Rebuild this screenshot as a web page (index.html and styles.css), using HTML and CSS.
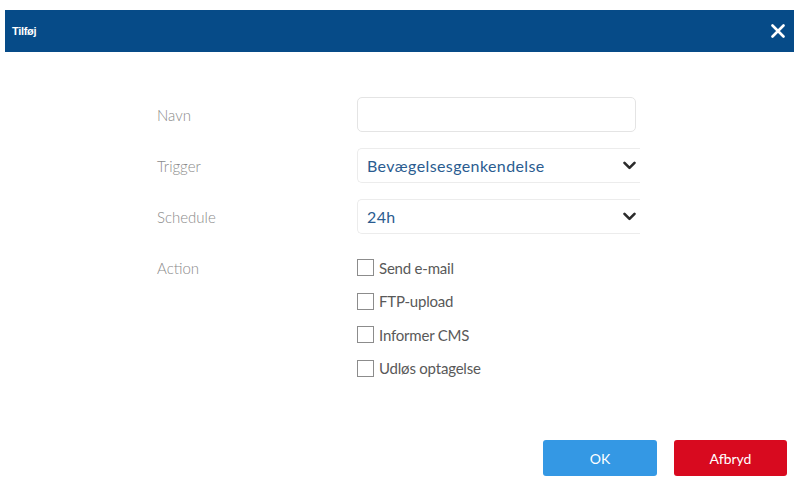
FILE: index.html
```html
<!DOCTYPE html>
<html lang="da">
<head>
<meta charset="utf-8">
<title>Tilføj</title>
<link rel="stylesheet" href="styles.css">
</head>
<body>
<div class="dialog">
  <header class="titlebar">
    <span class="title">Tilføj</span>
    <svg class="close" width="14" height="14" viewBox="0 0 14 14" aria-label="Luk">
      <path d="M1.5 1.5 L12.5 12.5 M12.5 1.5 L1.5 12.5" stroke="#fff" stroke-width="2.6" stroke-linecap="round" fill="none"/>
    </svg>
  </header>

  <form class="form">
    <label class="label">Navn</label>
    <div class="control"><input class="input" type="text"></div>

    <label class="label">Trigger</label>
    <div class="control select">
      <span class="value">Bevægelsesgenkendelse</span>
      <svg class="chev" width="13" height="9" viewBox="0 0 13 9"><path d="M1.5 1.8 L6.5 6.8 L11.5 1.8" stroke="#2b2b2b" stroke-width="2.6" fill="none" stroke-linecap="round" stroke-linejoin="round"/></svg>
    </div>

    <label class="label">Schedule</label>
    <div class="control select">
      <span class="value">24h</span>
      <svg class="chev" width="13" height="9" viewBox="0 0 13 9"><path d="M1.5 1.8 L6.5 6.8 L11.5 1.8" stroke="#2b2b2b" stroke-width="2.6" fill="none" stroke-linecap="round" stroke-linejoin="round"/></svg>
    </div>

    <label class="label action-label">Action</label>
    <div class="checks">
      <div class="check"><span class="box"></span><span>Send e-mail</span></div>
      <div class="check"><span class="box"></span><span>FTP-upload</span></div>
      <div class="check"><span class="box"></span><span>Informer CMS</span></div>
      <div class="check"><span class="box"></span><span>Udløs optagelse</span></div>
    </div>
  </form>

  <footer class="buttons">
    <button class="btn ok" type="button">OK</button>
    <button class="btn cancel" type="button">Afbryd</button>
  </footer>
</div>
</body>
</html>
```

FILE: styles.css
```css
html, body {
  margin: 0;
  padding: 0;
  background: #fff;
}
body {
  font-family: Lato, "Open Sans", "Liberation Sans", sans-serif;
}
.dialog {
  height: 482px;
  display: flex;
  flex-direction: column;
}
.titlebar {
  margin: 10px 7px 0 5px;
  height: 42px;
  background: #064b88;
  display: flex;
  align-items: center;
  justify-content: space-between;
  padding: 0 9px 0 7px;
}
.title {
  color: #fff;
  font-family: "Liberation Sans", Arial, sans-serif;
  font-weight: bold;
  font-size: 11px;
  letter-spacing: -0.3px;
}
.close {
  display: block;
}
.form {
  margin-top: 45px;
  padding-left: 157px;
  display: grid;
  grid-template-columns: 200px 283px;
  grid-auto-rows: 35px;
  row-gap: 16px;
}
.label {
  color: #8a8a8a;
  font-size: 15px;
  font-weight: 300;
  display: flex;
  align-items: center;
}
.control {
  height: 35px;
  box-sizing: border-box;
}
.input {
  width: 279px;
  height: 35px;
  box-sizing: border-box;
  border: 1px solid #e4e4e4;
  border-radius: 5px;
  margin: 0;
  padding: 0 10px;
  outline: none;
  background: #fff;
}
.select {
  border-top: 1px solid #ececec;
  border-bottom: 1px solid #ececec;
  border-left: 1px solid #ececec;
  border-radius: 5px 0 0 5px;
  display: flex;
  align-items: center;
  justify-content: space-between;
  padding: 0 4px 0 9px;
}
.value {
  color: #2a5c90;
  font-size: 16px;
  letter-spacing: 0.4px;
}
.chev {
  display: block;
}
.action-label {
  align-self: start;
  height: 17px;
  margin-top: 9px;
}
.checks {
  grid-row: span 4;
  margin-top: 9px;
  display: flex;
  flex-direction: column;
  gap: 16.5px;
}
.check {
  display: flex;
  align-items: center;
  height: 17px;
  color: #595959;
  font-size: 15px;
  letter-spacing: -0.2px;
}
.box {
  width: 17px;
  height: 17px;
  box-sizing: border-box;
  border: 1px solid #8c8c8c;
  margin-right: 5px;
  flex: none;
}
.buttons {
  margin-top: auto;
  margin-bottom: 6px;
  display: flex;
  justify-content: flex-end;
  gap: 17px;
  padding-right: 14px;
}
.btn {
  height: 36px;
  border: none;
  border-radius: 3px;
  color: #fff;
  font-family: Lato, "Open Sans", sans-serif;
  font-size: 14px;
  margin: 0;
  padding: 0;
}
.ok {
  width: 114px;
  background: #3498e4;
}
.cancel {
  width: 113px;
  background: #d80a1f;
}
```
